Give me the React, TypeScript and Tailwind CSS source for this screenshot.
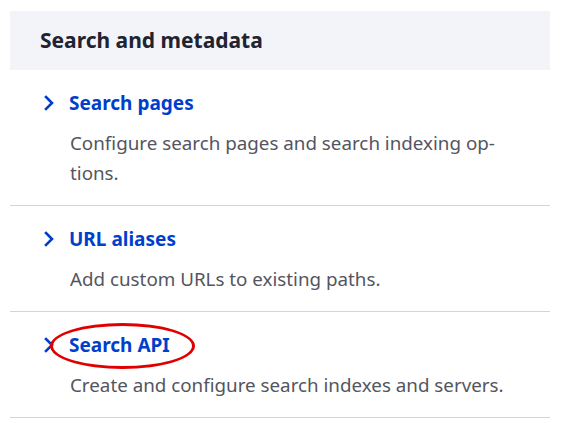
import React from "react";

type Item = { title: string; desc: React.ReactNode; circled?: boolean };

const items: Item[] = [
  {
    title: "Search pages",
    desc: (
      <>
        Configure search pages and search indexing op-
        <br />
        tions.
      </>
    ),
  },
  { title: "URL aliases", desc: "Add custom URLs to existing paths." },
  { title: "Search API", desc: "Create and configure search indexes and servers.", circled: true },
];

function Chevron() {
  return (
    <svg width="12" height="16" viewBox="0 0 12 16" className="shrink-0">
      <polyline points="3,2 9,8 3,14" fill="none" stroke="#003ecc" strokeWidth="2.6" strokeLinecap="square" />
    </svg>
  );
}

export default function App() {
  return (
    <div className="min-h-[429px] bg-white pl-[10px] pt-[11px] font-['Noto_Sans',sans-serif]">
      <div className="w-[540px]">
        <div className="flex h-[59px] items-center bg-[#f3f4f9] px-[30px]">
          <h2 className="text-[21px] font-bold text-[#222330]">Search and metadata</h2>
        </div>
        <ul>
          {items.map((it) => (
            <li key={it.title} className="relative border-b border-[#d3d4d9] pt-[18px] pb-[17px]">
              <div className="flex h-[30px] items-center gap-[14px] pl-[33px]">
                <Chevron />
                <a className="text-[19px] font-bold text-[#003ecc]">{it.title}</a>
              </div>
              <p className="mt-[10px] pl-[60px] text-[18.8px] leading-[30px] text-[#545560]">{it.desc}</p>
              {it.circled && (
                <div className="pointer-events-none absolute left-[40px] top-[11px] h-[46px] w-[145px] rounded-[50%] border-[3px] border-[#e00000]" />
              )}
            </li>
          ))}
        </ul>
      </div>
    </div>
  );
}
